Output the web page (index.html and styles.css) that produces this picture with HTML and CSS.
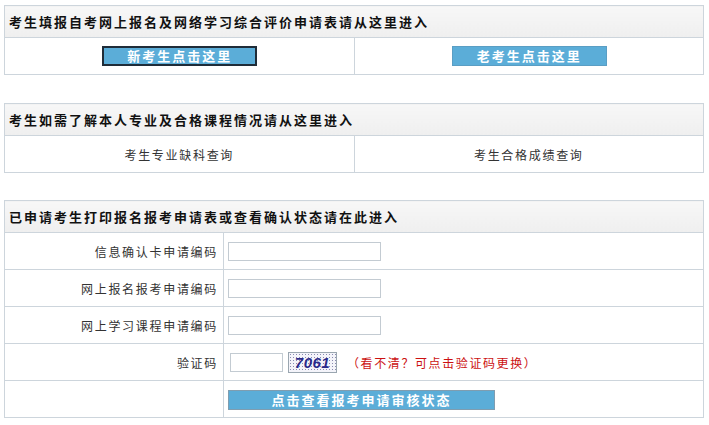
FILE: index.html
```html
<!DOCTYPE html>
<html lang="zh-CN">
<head>
<meta charset="utf-8">
<title>自考网上报名</title>
<link rel="stylesheet" href="styles.css">
</head>
<body>
<div class="page">
  <table class="box box-one">
    <tr><th colspan="2" class="head">考生填报自考网上报名及网络学习综合评价申请表请从这里进入</th></tr>
    <tr>
      <td class="half center"><span class="btn btn-new">新考生点击这里</span></td>
      <td class="half center"><span class="btn btn-old">老考生点击这里</span></td>
    </tr>
  </table>

  <table class="box box-two">
    <tr><th colspan="2" class="head">考生如需了解本人专业及合格课程情况请从这里进入</th></tr>
    <tr>
      <td class="half center link">考生专业缺科查询</td>
      <td class="half center link">考生合格成绩查询</td>
    </tr>
  </table>

  <table class="box box-three">
    <colgroup><col class="col-label"><col class="col-field"></colgroup>
    <tr><th colspan="2" class="head">已申请考生打印报名报考申请表或查看确认状态请在此进入</th></tr>
    <tr>
      <td class="label">信息确认卡申请编码</td>
      <td class="field"><span class="input"></span></td>
    </tr>
    <tr>
      <td class="label">网上报名报考申请编码</td>
      <td class="field"><span class="input"></span></td>
    </tr>
    <tr>
      <td class="label">网上学习课程申请编码</td>
      <td class="field"><span class="input"></span></td>
    </tr>
    <tr>
      <td class="label">验证码</td>
      <td class="field">
        <div class="captcha-row">
          <span class="input input-short"></span>
          <span class="captcha">7061</span>
          <span class="hint">（看不清？可点击验证码更换）</span>
        </div>
      </td>
    </tr>
    <tr>
      <td class="label"></td>
      <td class="field"><span class="btn btn-check">点击查看报考申请审核状态</span></td>
    </tr>
  </table>
</div>
</body>
</html>
```

FILE: styles.css
```css
html, body {
  margin: 0;
  padding: 0;
  background: #ffffff;
}
body {
  font-family: "Noto Sans CJK SC", "Liberation Sans", sans-serif;
  font-size: 12px;
  color: #333333;
}
.page {
  width: 700px;
  padding: 5px 0 0 4px;
}
.box {
  width: 700px;
  border-collapse: collapse;
  table-layout: fixed;
}
.box td, .box th {
  border: 1px solid #cdd5dc;
  padding: 0;
}
.box-two {
  margin-top: 28px;
}
.box-three {
  margin-top: 27px;
}
.col-label {
  width: 219px;
}
.head {
  height: 31px;
  background: linear-gradient(#f7f7f7, #efefef);
  text-align: left;
  padding-left: 4px !important;
  font-size: 13px;
  font-weight: bold;
  letter-spacing: 2px;
  color: #111111;
}
.half {
  width: 50%;
  height: 36px;
}
.center {
  text-align: center;
}
.link {
  font-size: 12px;
  letter-spacing: 1.7px;
  color: #333333;
}
.btn {
  display: inline-block;
  box-sizing: border-box;
  height: 20px;
  line-height: 17px;
  background: #5badd8;
  color: #ffffff;
  font-size: 13px;
  font-weight: bold;
  letter-spacing: 2px;
  text-align: center;
  vertical-align: middle;
}
.btn-new {
  width: 155px;
  border: 2px solid #1f2c38;
  line-height: 15px;
  margin-left: 1px;
}
.btn-old {
  width: 155px;
  border: 1px solid #5a9ec4;
  margin-left: 1px;
}
.label {
  height: 36px;
  text-align: right;
  padding-right: 5px !important;
  letter-spacing: 1.7px;
  color: #333333;
}
.field {
  padding-left: 4px !important;
}
.input {
  display: inline-block;
  box-sizing: border-box;
  width: 153px;
  height: 19px;
  border: 1px solid #c3cbd2;
  background: #ffffff;
  vertical-align: middle;
}
.captcha-row {
  display: flex;
  align-items: center;
  gap: 5px;
  padding-left: 2px;
}
.input-short {
  width: 53px;
}
.captcha {
  display: inline-block;
  box-sizing: border-box;
  width: 49px;
  height: 21px;
  line-height: 19px;
  border: 1px solid #9aa6b0;
  background-color: #f4f4fa;
  background-image: radial-gradient(#8a8ab0 0.6px, transparent 0.9px);
  background-size: 3px 3px;
  font-family: "Liberation Sans", sans-serif;
  font-size: 15px;
  font-style: italic;
  font-weight: bold;
  color: #2a2a8a;
  text-align: center;
  letter-spacing: 0.5px;
}
.hint {
  margin-left: 5px;
  color: #cc1111;
  font-size: 12px;
  letter-spacing: 1.6px;
}
.btn-check {
  width: 267px;
  border: 1px solid #7f9db0;
  margin-top: 1px;
}
```
